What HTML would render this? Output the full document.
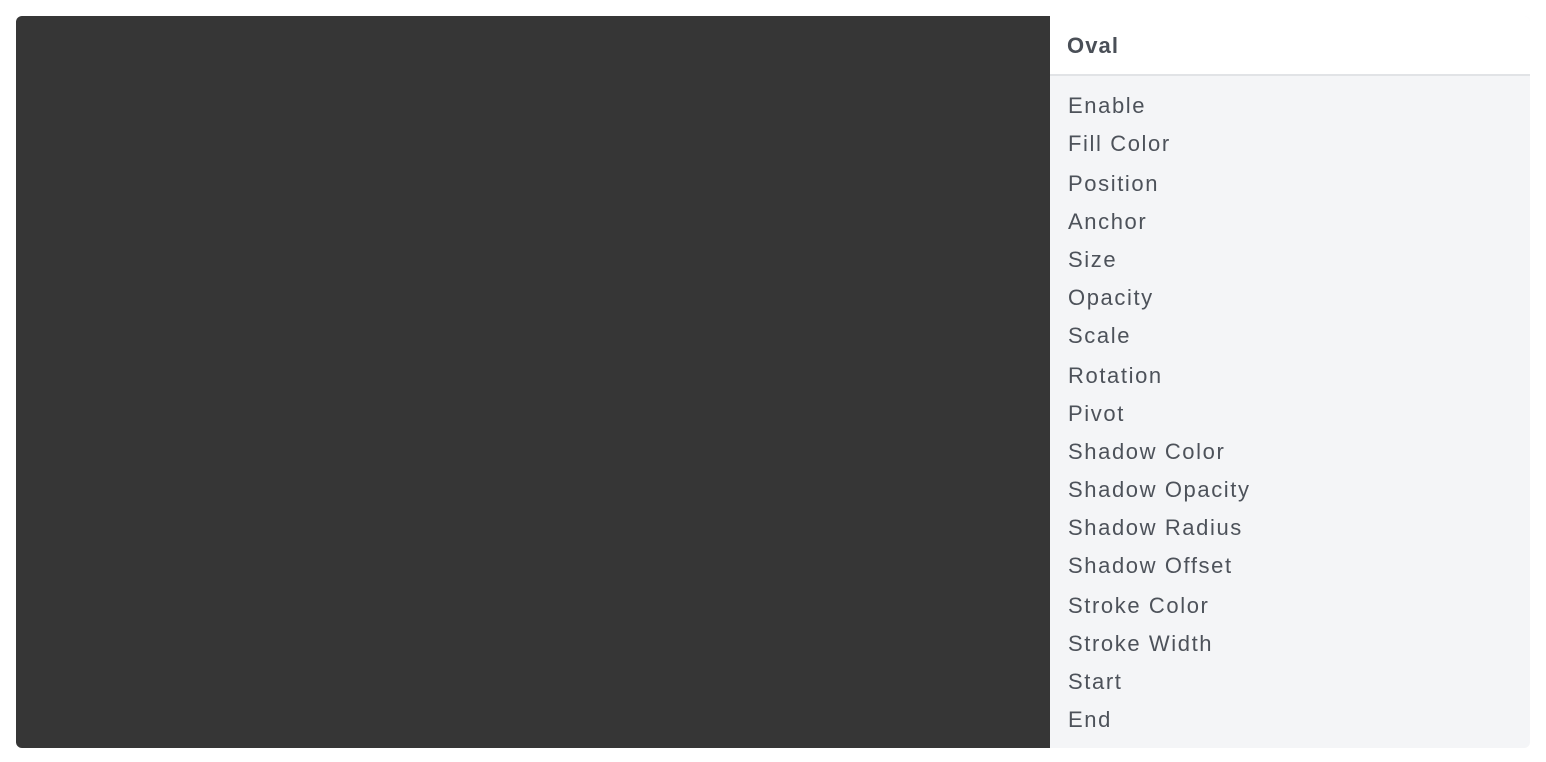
<!DOCTYPE html>
<html><head><style>
body{margin:0;width:1546px;height:762px;background:#fff;position:relative;overflow:hidden;font-family:"Liberation Sans",sans-serif;}
.dark{position:absolute;left:16px;top:16px;width:1040px;height:732px;background:#363636;border-radius:6px;}
.panel{position:absolute;left:1050px;top:16px;width:480px;height:732px;background:#f4f5f7;border-radius:0 6px 6px 0;overflow:hidden;}
.hdr{position:absolute;left:0;top:0;width:480px;height:58px;background:#fff;border-bottom:2px solid #e1e3e6;}
.hdr span{position:absolute;left:17px;top:17px;font-weight:bold;font-size:22px;color:#4a4f57;letter-spacing:1.1px;}
.it{position:absolute;left:1068px;font-size:22px;color:#4d525a;letter-spacing:1.6px;line-height:24px;}
</style></head><body>
<div class="dark"></div>
<div class="panel"><div class="hdr"><span>Oval</span></div></div>
<div class="it" style="top:94px">Enable</div>
<div class="it" style="top:132px">Fill Color</div>
<div class="it" style="top:172px">Position</div>
<div class="it" style="top:210px">Anchor</div>
<div class="it" style="top:248px">Size</div>
<div class="it" style="top:286px">Opacity</div>
<div class="it" style="top:324px">Scale</div>
<div class="it" style="top:364px">Rotation</div>
<div class="it" style="top:402px">Pivot</div>
<div class="it" style="top:440px">Shadow Color</div>
<div class="it" style="top:478px">Shadow Opacity</div>
<div class="it" style="top:516px">Shadow Radius</div>
<div class="it" style="top:554px">Shadow Offset</div>
<div class="it" style="top:594px">Stroke Color</div>
<div class="it" style="top:632px">Stroke Width</div>
<div class="it" style="top:670px">Start</div>
<div class="it" style="top:708px">End</div>
</body></html>
